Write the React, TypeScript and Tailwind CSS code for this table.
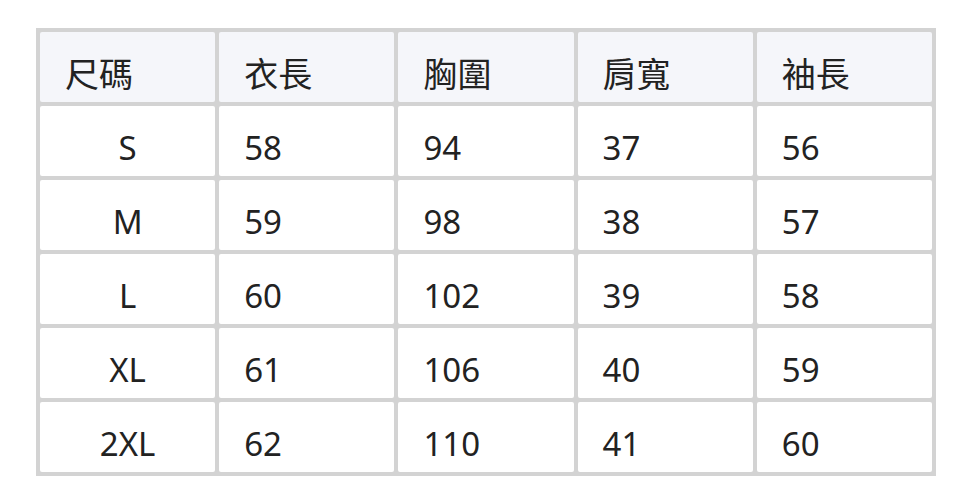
const HEADERS = ["尺碼", "衣長", "胸圍", "肩寬", "袖長"];

const ROWS: (string | number)[][] = [
  ["S", 58, 94, 37, 56],
  ["M", 59, 98, 38, 57],
  ["L", 60, 102, 39, 58],
  ["XL", 61, 106, 40, 59],
  ["2XL", 62, 110, 41, 60],
];

export default function App() {
  return (
    <div
      className="w-[972px] h-[503px] bg-white pt-[28px] pl-[36px] text-[#222] text-[33px]"
      style={{ fontFamily: '"Noto Sans", "Noto Sans CJK TC", sans-serif' }}
    >
      <div className="w-[900px] bg-[#d3d3d3] p-[4px] grid grid-cols-5 gap-[4px]">
        {HEADERS.map((h) => (
          <div
            key={h}
            className="h-[70px] bg-[#f5f6fa] rounded-[2px] flex items-center pl-[25px] pt-[14px] leading-none text-[34px]"
          >
            {h}
          </div>
        ))}
        {ROWS.map((row) =>
          row.map((cell, i) => (
            <div
              key={`${row[0]}-${i}`}
              className={`h-[70px] bg-white rounded-[2px] flex items-center pt-[12px] leading-none ${
                i === 0 ? "justify-center" : "pl-[25px]"
              }`}
            >
              {cell}
            </div>
          ))
        )}
      </div>
    </div>
  );
}
